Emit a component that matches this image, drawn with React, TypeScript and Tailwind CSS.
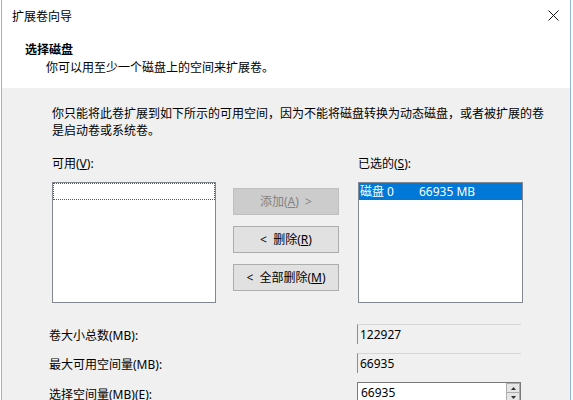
const font = {
  fontFamily: '"Noto Sans", "Noto Sans CJK SC", sans-serif',
};

const styles = {
  listbox: "h-[121px] border border-[#828790] bg-white",
  button:
    "flex h-[27px] w-full items-center justify-center border text-[12px] leading-[17px]",
  readonly:
    "flex h-[20px] w-[164px] items-center border-t border-l border-t-[#d6d6d6] border-l-[#8c8c8c] bg-[#f0f0f0] pl-[2px] text-[12px]",
};

const Key = ({ k }: { k: string }) => <span className="underline">{k}</span>;

const CloseIcon = () => (
  <svg width="11" height="11" viewBox="0 0 11 11">
    <path d="M0.5 0.5 L10.5 10.5 M10.5 0.5 L0.5 10.5" stroke="#111" strokeWidth="1" />
  </svg>
);

export default function App() {
  return (
    <div className="h-[400px] w-[573px] overflow-hidden bg-white text-black" style={font}>
      <div className="ml-[1px] flex h-[400px] w-[570px] flex-col border-x border-[#8fb7dd]">
        {/* title + wizard header */}
        <div className="bg-white">
          <div className="flex h-[32px] items-center justify-between pl-[10px] pr-[10px]">
            <span className="text-[12px] leading-[17px]">扩展卷向导</span>
            <span className="mr-[1px] mt-[-2px]">
              <CloseIcon />
            </span>
          </div>
          <div className="h-[56px] pt-[9px]">
            <div className="pl-[23px] text-[12px] font-bold leading-[17px]">选择磁盘</div>
            <div className="mt-[1px] pl-[44px] text-[12px] leading-[17px]">
              你可以用至少一个磁盘上的空间来扩展卷。
            </div>
          </div>
        </div>
        <div className="h-[1px] bg-[#b9b9b9]" />

        {/* body */}
        <div className="flex-1 bg-[#f0f0f0] pt-[17px] text-[12px] leading-[17px]">
          <div className="whitespace-nowrap pl-[50px]">
            <p>你只能将此卷扩展到如下所示的可用空间，因为不能将磁盘转换为动态磁盘，或者被扩展的卷</p>
            <p>是启动卷或系统卷。</p>
          </div>

          <div className="mt-[16px] flex pl-[50px]">
            <div className="w-[164px]">
              <div>
                可用(<Key k="V" />):
              </div>
              <div className={`${styles.listbox} mt-[10px]`}>
                <div className="h-[17px] border border-dotted border-[#555]" />
              </div>
            </div>

            <div className="ml-[17px] w-[106px] pt-[33px]">
              <div className={`${styles.button} border-[#bfbfbf] bg-[#cccccc] text-[#838383]`}>
                添加(<Key k="A" />)&nbsp;&nbsp;&gt;
              </div>
              <div className={`${styles.button} mt-[11px] border-[#adadad] bg-[#e1e1e1]`}>
                &lt;&nbsp;&nbsp;删除(<Key k="R" />)
              </div>
              <div className={`${styles.button} mt-[11px] border-[#adadad] bg-[#e1e1e1]`}>
                &lt;&nbsp;&nbsp;全部删除(<Key k="M" />)
              </div>
            </div>

            <div className="ml-[19px] w-[165px]">
              <div>
                已选的(<Key k="S" />):
              </div>
              <div className={`${styles.listbox} mt-[10px]`}>
                <div className="flex h-[17px] items-center bg-[#0078d7] pl-[1px] text-white">
                  <span className="w-[59px]">磁盘 0</span>
                  <span>66935 MB</span>
                </div>
              </div>
            </div>
          </div>

          <div className="mt-[21px] flex flex-col gap-[9px] pl-[47px]">
            <div className="flex items-center">
              <span className="w-[308px] pt-[2px]">卷大小总数(MB):</span>
              <div className={styles.readonly}>122927</div>
            </div>
            <div className="flex items-center">
              <span className="w-[308px] pt-[3px]">最大可用空间量(MB):</span>
              <div className={styles.readonly}>66935</div>
            </div>
            <div className="flex items-center">
              <span className="w-[308px] pt-[3px]">
                选择空间量(MB)(<Key k="E" />):
              </span>
              <div className="flex h-[21px] w-[164px] border border-[#7a7a7a] bg-white">
                <span className="flex-1 pl-[3px] text-[12px] leading-[19px]">66935</span>
                <div className="flex w-[14px] flex-col">
                  <div className="flex h-[10px] items-center justify-center border border-[#adadad] bg-[#e6e6e6]">
                    <svg width="5" height="3" viewBox="0 0 5 3">
                      <path d="M0 3 L2.5 0 L5 3 Z" fill="#333" />
                    </svg>
                  </div>
                  <div className="flex h-[9px] items-center justify-center border border-t-0 border-[#adadad] bg-[#e6e6e6]">
                    <svg width="5" height="3" viewBox="0 0 5 3">
                      <path d="M0 0 L2.5 3 L5 0 Z" fill="#333" />
                    </svg>
                  </div>
                </div>
              </div>
            </div>
          </div>
        </div>
      </div>
    </div>
  );
}
